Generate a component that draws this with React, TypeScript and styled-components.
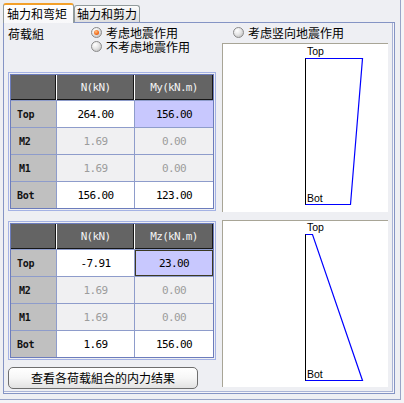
import React from 'react';
import styled, { createGlobalStyle, css } from 'styled-components';

const Global = createGlobalStyle`
  html, body { margin: 0; padding: 0; background: #f4f4f7; }
  body { font-family: "Noto Sans CJK SC", "Noto Sans", sans-serif; font-size: 12px; color: #000; }
  * { box-sizing: border-box; }
`;

const Frame = styled.div`
  width: 401px;
  height: 400px;
  padding: 3px 0 0 3px;
  background: #eeeff3;
  border-right: 1px solid #98a4c8;
  border-bottom: 1px solid #98a4c8;
  display: flex;
  flex-direction: column;
`;

const TabStrip = styled.div`
  display: flex;
  align-items: flex-start;
  height: 19px;
  position: relative;
  z-index: 1;
`;

const Tab = styled.div<{ $active?: boolean }>`
  font-size: 12px;
  line-height: 14px;
  white-space: nowrap;
  border: 1px solid #919b9c;
  border-bottom: none;
  border-radius: 3px 3px 0 0;
  ${(p) =>
    p.$active
      ? css`
          width: 71px;
          height: 20px;
          padding: 2px 0 0 3px;
          border-top: 2px solid #f3a02a;
          background: linear-gradient(#ffffff, #f8f8fa);
        `
      : css`
          width: 66px;
          height: 17px;
          margin-top: 2px;
          padding: 1px 0 0 2px;
          background: linear-gradient(#fcfcfc, #dedede);
        `}
`;

const Panel = styled.div`
  width: 392px;
  height: 372px;
  border: 1px solid #8494c4;
  box-shadow: inset -1px -1px 0 #f6f6fa, inset -2px -2px 0 #aab4d6;
  padding: 0 0 0 4px;
  display: flex;
  flex-direction: column;
`;

const Section = styled.div<{ $h: number; $top?: number }>`
  display: grid;
  grid-template-columns: 208px 166px;
  column-gap: 6px;
  height: ${(p) => p.$h}px;
  margin-top: ${(p) => p.$top ?? 0}px;
`;

const Column = styled.div`
  display: flex;
  flex-direction: column;
`;

const LoadHeader = styled.div`
  display: flex;
  padding-top: 3px;
  line-height: 14px;
`;

const LoadLabel = styled.div`
  width: 83px;
  line-height: 15px;
`;

const RadioList = styled.div`
  display: flex;
  flex-direction: column;
`;

const RadioRow = styled.div<{ $indent?: number }>`
  display: flex;
  align-items: center;
  height: 14px;
  line-height: 14px;
  padding-left: ${(p) => p.$indent ?? 0}px;
  white-space: nowrap;
`;

const RadioDot = styled.span<{ $on?: boolean }>`
  width: 11px;
  height: 11px;
  border-radius: 50%;
  border: 1px solid #8a8a8a;
  background: radial-gradient(circle at 35% 30%, #ffffff 0%, #e6e6e6 45%, #b4b4b4 100%);
  margin-right: 4px;
  margin-top: -1px;
  display: flex;
  align-items: center;
  justify-content: center;
  flex: none;
  &::after {
    content: '';
    display: ${(p) => (p.$on ? 'block' : 'none')};
    width: 5px;
    height: 5px;
    border-radius: 50%;
    background: radial-gradient(circle at 40% 35%, #ffc080 0%, #f26a1a 60%, #d04a08 100%);
  }
`;

const TableFrame = styled.div<{ $top: number }>`
  margin-top: ${(p) => p.$top}px;
  width: 208px;
  border: 1px solid #a4b2e4;
  padding: 1px;
`;

const Table = styled.div`
  display: flex;
  flex-direction: column;
  gap: 1px;
  border: 1px solid #6c7cbc;
  background: #8e9ccb;
`;

const HeaderRow = styled.div`
  display: grid;
  grid-template-columns: 45px 77px 78px;
  column-gap: 1px;
  height: 25px;
  background: #ffffff;
`;

const HeadCell = styled.div`
  background: #646464;
  box-shadow: inset -1px -1px 0 #161616;
  color: #f2f2f2;
  font-family: "DejaVu Sans Mono", "Liberation Mono", monospace;
  font-size: 11px;
  letter-spacing: -0.7px;
  display: flex;
  align-items: center;
  justify-content: center;
  padding-bottom: 1px;
`;

const DataRow = styled.div`
  display: grid;
  grid-template-columns: 45px 77px 78px;
  column-gap: 1px;
  height: 26px;
`;

const RowLabel = styled.div<{ $indent: number }>`
  background: #c0c0c0;
  font-family: "DejaVu Sans Mono", "Liberation Mono", monospace;
  font-weight: bold;
  font-size: 10px;
  letter-spacing: -0.3px;
  display: flex;
  align-items: center;
  padding-left: ${(p) => p.$indent}px;
  color: #111;
`;

const ValueCell = styled.div<{ $dim?: boolean; $hl?: boolean; $sel?: boolean }>`
  background: ${(p) => (p.$hl ? '#c8c8fe' : p.$dim ? '#f0f0f2' : '#ffffff')};
  color: ${(p) => (p.$dim ? '#9c9c9c' : '#000')};
  font-family: "DejaVu Sans Mono", "Liberation Mono", monospace;
  font-size: 11px;
  letter-spacing: -0.6px;
  display: flex;
  align-items: center;
  justify-content: center;
  ${(p) => p.$sel && css`box-shadow: inset 0 0 0 1px #3c3a22;`}
`;

const RightRadio = styled.div`
  padding-top: 3px;
`;

const Graph = styled.div<{ $h: number; $top: number }>`
  margin-top: ${(p) => p.$top}px;
  width: 166px;
  height: ${(p) => p.$h}px;
  background: #ffffff;
  border-top: 1px solid #a8a596;
  border-left: 1px solid #a8a596;
  svg { display: block; }
`;

const ResultButton = styled.button`
  margin-top: 7px;
  width: 190px;
  height: 22px;
  border: 1px solid #6e6e6e;
  border-radius: 5px;
  background: linear-gradient(#ffffff 0%, #f6f6f6 50%, #e2e2e2 100%);
  font-family: "Noto Sans CJK SC", "Noto Sans", sans-serif;
  font-size: 12px;
  color: #000;
  padding: 0;
  line-height: 18px;
`;

type Row = { label: string; indent: number; a: string; b: string; dim?: boolean; hl?: boolean; sel?: boolean };

const ForceTable: React.FC<{ top: number; moment: string; rows: Row[] }> = ({ top, moment, rows }) => (
  <TableFrame $top={top}>
    <Table>
      <HeaderRow>
        <HeadCell />
        <HeadCell>N(kN)</HeadCell>
        <HeadCell>{moment}</HeadCell>
      </HeaderRow>
      {rows.map((r) => (
        <DataRow key={r.label}>
          <RowLabel $indent={r.indent}>{r.label}</RowLabel>
          <ValueCell $dim={r.dim}>{r.a}</ValueCell>
          <ValueCell $dim={r.dim} $hl={r.hl} $sel={r.sel}>{r.b}</ValueCell>
        </DataRow>
      ))}
    </Table>
  </TableFrame>
);

const Diagram: React.FC<{ h: number; top: number; y0: number; y1: number; tx: number; bx: number; topBase: number; botBase: number }> = ({ h, top, y0, y1, tx, bx, topBase, botBase }) => (
  <Graph $h={h} $top={top}>
    <svg width="165" height={h - 1} viewBox={`0 0 165 ${h - 1}`}>
      <line x1="82.5" y1={y0} x2="82.5" y2={y1 + 0.5} stroke="#000" strokeWidth="1" shapeRendering="crispEdges" />
      <polyline
        points={`82.5,${y0 + 0.5} ${tx + 0.5},${y0 + 0.5} ${bx + 0.5},${y1 + 0.5} 82.5,${y1 + 0.5}`}
        fill="none"
        stroke="#0000ff"
        strokeWidth="1.2"
      />
      <text x="84" y={topBase} fontFamily="Liberation Sans, Arial, sans-serif" fontSize="10.5" fill="#000">Top</text>
      <text x="84" y={botBase} fontFamily="Liberation Sans, Arial, sans-serif" fontSize="10.5" fill="#000">Bot</text>
    </svg>
  </Graph>
);

const table1: Row[] = [
  { label: 'Top', indent: 6, a: '264.00', b: '156.00', hl: true },
  { label: 'M2', indent: 8, a: '1.69', b: '0.00', dim: true },
  { label: 'M1', indent: 8, a: '1.69', b: '0.00', dim: true },
  { label: 'Bot', indent: 6, a: '156.00', b: '123.00' },
];

const table2: Row[] = [
  { label: 'Top', indent: 6, a: '-7.91', b: '23.00', hl: true, sel: true },
  { label: 'M2', indent: 8, a: '1.69', b: '0.00', dim: true },
  { label: 'M1', indent: 8, a: '1.69', b: '0.00', dim: true },
  { label: 'Bot', indent: 6, a: '1.69', b: '156.00' },
];

export default function App() {
  return (
    <>
      <Global />
      <Frame>
        <TabStrip>
          <Tab $active>轴力和弯矩</Tab>
          <Tab>轴力和剪力</Tab>
        </TabStrip>
        <Panel>
          <Section $h={189}>
            <Column>
              <LoadHeader>
                <LoadLabel>荷载組</LoadLabel>
                <RadioList>
                  <RadioRow><RadioDot $on />考虑地震作用</RadioRow>
                  <RadioRow><RadioDot />不考虑地震作用</RadioRow>
                </RadioList>
              </LoadHeader>
              <ForceTable top={18} moment="My(kN.m)" rows={table1} />
            </Column>
            <Column>
              <RightRadio>
                <RadioRow $indent={11}><RadioDot />考虑竖向地震作用</RadioRow>
              </RightRadio>
              <Diagram h={169} top={3} y0={14} y1={160} tx={139} bx={127} topBase={11} botBase={158} />
            </Column>
          </Section>
          <Section $h={180}>
            <Column>
              <ForceTable top={9} moment="Mz(kN.m)" rows={table2} />
              <ResultButton>查看各荷载組合的内力结果</ResultButton>
            </Column>
            <Column>
              <Diagram h={167} top={8} y0={13} y1={159} tx={89} bx={139} topBase={10} botBase={157} />
            </Column>
          </Section>
        </Panel>
      </Frame>
    </>
  );
}
